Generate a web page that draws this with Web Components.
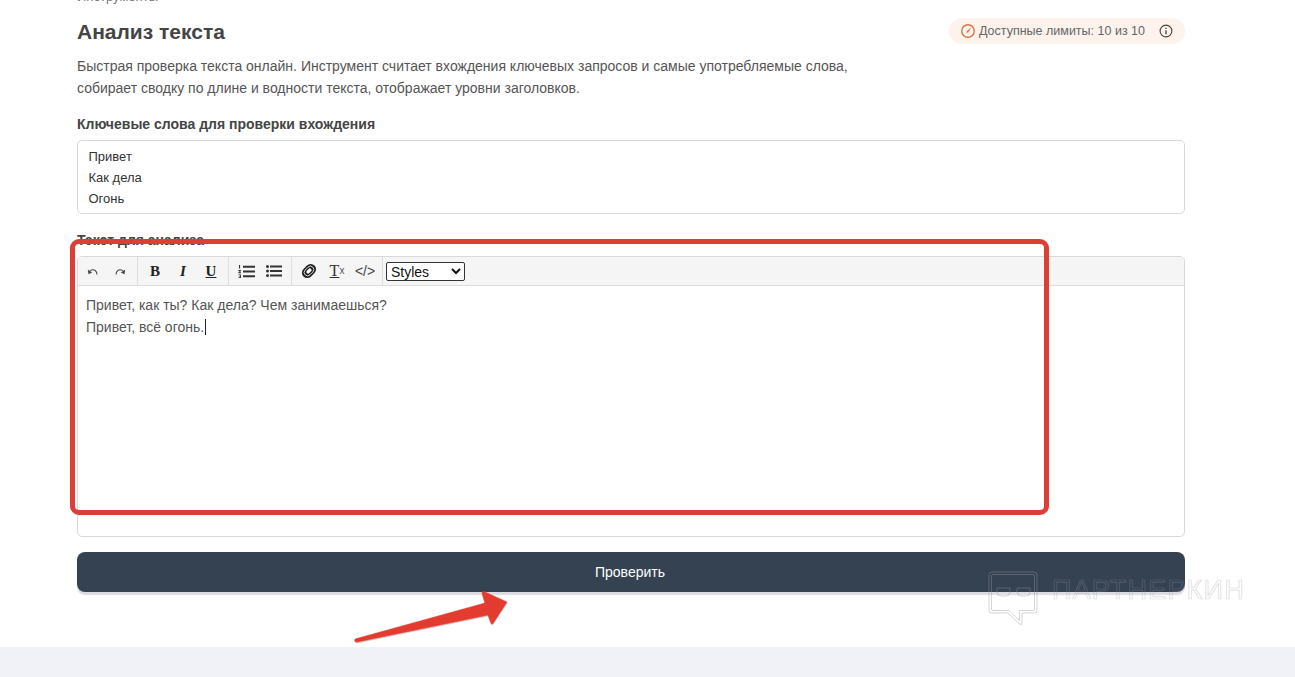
<!DOCTYPE html>
<html lang="ru">
<head>
<meta charset="utf-8">
<title>Анализ текста</title>
<style>
    html, body { margin: 0; height: 677px; overflow: hidden; background: #fff; }
    body { font-family: "Liberation Sans", Arial, sans-serif; color: #4a4a4a; }
</style>
</head>
<body>
<tool-page>
    <limit-badge slot="badge">Доступные лимиты: 10 из 10</limit-badge>
    <keyword-box slot="keywords"></keyword-box>
    <text-editor slot="editor">
        <div>Привет, как ты? Как дела? Чем занимаешься?</div>
        <div>Привет, всё огонь.<span style="border-left:1px solid #222;margin-left:1px"></span></div>
    </text-editor>
</tool-page>
<script>
class ToolPage extends HTMLElement {
    constructor() {
        super()
        this.attachShadow({mode: 'open'})
        this.shadowRoot.innerHTML = `
            <style>
                :host { display: flex; flex-direction: column; height: 677px; position: relative; overflow: hidden; }
                .main { flex: 1; display: flex; flex-direction: column; padding: 0 110px 0 77px; margin-top: -10px; }
                .crumbs { font-size: 13px; line-height: 14px; color: #777; }
                .head { display: flex; justify-content: space-between; align-items: center; margin-top: 13px; height: 30px; }
                h1 { margin: 0; font-size: 21px; line-height: 30px; font-weight: bold; color: #444; }
                p { margin: 8px 0 0; font-size: 14px; line-height: 22px; color: #555; max-width: 800px; }
                label { display: block; margin: 16px 0 7px; font-size: 14px; line-height: 18px; font-weight: bold; color: #444; }
                label.second { margin-top: 17px; }
                button { margin-top: 15px; height: 40px; border: 0; border-radius: 8px; background: #354252; color: #fff;
                    font: 14px "Liberation Sans", Arial, sans-serif; box-shadow: 0 3px 1px #dcdde3; padding: 0 2px 0 0; }
                footer { height: 30px; background: #f1f2f7; flex: none; }
            </style>
            <div class="main">
                <div class="crumbs">Инструменты</div>
                <div class="head">
                    <h1>Анализ текста</h1>
                    <slot name="badge"></slot>
                </div>
                <p>Быстрая проверка текста онлайн. Инструмент считает вхождения ключевых запросов и самые употребляемые слова, собирает сводку по длине и водности текста, отображает уровни заголовков.</p>
                <label>Ключевые слова для проверки вхождения</label>
                <slot name="keywords"></slot>
                <label class="second">Текст для анализа</label>
                <slot name="editor"></slot>
                <button type="button">Проверить</button>
            </div>
            <footer></footer>
            <partner-mark></partner-mark>
            <red-markup></red-markup>
        `
    }
}

class LimitBadge extends HTMLElement {
    constructor() {
        super()
        this.attachShadow({mode: 'open'})
        this.shadowRoot.innerHTML = `
            <style>
                :host { display: flex; align-items: center; height: 26px; margin-bottom: 2px; padding: 0 12px; border-radius: 13px;
                    background: #fdf3ec; font-size: 12.5px; color: #666; }
                svg { display: block; flex: none; }
                .gauge { margin-right: 4px; }
                .info { margin-left: 14px; }
            </style>
            <svg class="gauge" width="14" height="14" viewBox="0 0 14 14" fill="none" stroke="#d9744a">
                <circle cx="7" cy="7" r="6.2" stroke-width="1.4"/>
                <path d="M9.3 4.700 7.700 5.700 6 7.200 5.700 8.400 7 8.300 8.200 6.800z" fill="#d9744a" stroke-width=".5"/>
            </svg>
            <span><slot></slot></span>
            <svg class="info" width="14" height="14" viewBox="0 0 14 14" fill="none" stroke="#444">
                <circle cx="7" cy="7" r="5.9" stroke-width="1.1"/>
                <path d="M7 6.200v4M7 3.800v1.300" stroke-width="1.300"/>
            </svg>
        `
    }
}

class KeywordBox extends HTMLElement {
    constructor() {
        super()
        this.attachShadow({mode: 'open'})
        this.shadowRoot.innerHTML = `
            <style>
                :host { display: block; box-sizing: border-box; height: 74px; padding: 5px 10.5px; border: 1px solid #d9d9d9;
                    border-radius: 5px; font-size: 13px; line-height: 21px; color: #333; }
            </style>
            <div>Привет</div>
            <div>Как дела</div>
            <div>Огонь</div>
        `
    }
}

class TextEditor extends HTMLElement {
    constructor() {
        super()
        this.attachShadow({mode: 'open'})
        this.shadowRoot.innerHTML = `
            <style>
                :host { display: block; box-sizing: border-box; height: 281px; border: 1px solid #d9d9d9; border-radius: 5px; }
                .bar { display: flex; align-items: center; height: 28px; background: #f5f5f5; border-bottom: 1px solid #ddd;
                    border-radius: 4px 4px 0 0; }
                .group { display: flex; align-items: center; height: 100%; padding: 0 3px; border-right: 1px solid #ddd; flex: none; }
                .group:first-child { padding-left: 0; }
                .btn { display: flex; align-items: center; justify-content: center; width: 28px; height: 100%; color: #222; }
                .serif { font: bold 15px "Liberation Serif", serif; }
                .serif.i { font-style: italic; }
                .serif.u { text-decoration: underline; }
                svg { display: block; }
                select { margin-left: 3px; width: 79px; height: 19px; font: 14px "Liberation Sans", Arial, sans-serif; color: #111;
                    background: #fff; border: 1px solid #333; border-radius: 2px; padding: 0; }
                .body { padding: 8px 8px; font-size: 14px; line-height: 22px; color: #555; }
                .code { font: 14px "Liberation Sans", Arial, sans-serif; color: #444; }
                .clear { font: 16px "Liberation Serif", serif; color: #333; }
                .clear u { text-decoration: underline; }
                .clear sub { font-size: 10px; font-family: "Liberation Sans", Arial, sans-serif; color: #555; vertical-align: -2px; line-height: 0; }
            </style>
            <div class="bar">
                <div class="group">
                    <div class="btn"><svg width="11" height="7" viewBox="0 0 11 7" fill="none" stroke="#444" stroke-width="1.100"><path d="M10 6.500C10 2.500 6.500.5 3.200 2.600"/><path d="M.8 1.600 1.500 6.200 5.200 4.400z" fill="#444" stroke="none"/></svg></div>
                    <div class="btn"><svg width="11" height="7" viewBox="0 0 11 7" fill="none" stroke="#444" stroke-width="1.100"><path d="M1 6.500C1 2.500 4.500.5 7.800 2.600"/><path d="M10.200 1.600 9.500 6.200 5.800 4.400z" fill="#444" stroke="none"/></svg></div>
                </div>
                <div class="group">
                    <div class="btn serif">B</div>
                    <div class="btn serif i">I</div>
                    <div class="btn serif u">U</div>
                </div>
                <div class="group">
                    <div class="btn"><svg width="17" height="13" viewBox="0 0 17 13" fill="#333"><path d="M5 .8h12v2H5zM5 5.500h12v2H5zM5 10.200h12v2H5z"/><path d="M1 0h1.100v3.400H1zM.4 5h2.600v1L1.500 7.300H3v.9H.4v-.9L1.900 6H.4zM.4 9.500H3v3.400H.4v-.7h1.700v-.7H1v-.6h1.100v-.7H.4z"/></svg></div>
                    <div class="btn"><svg width="16" height="12" viewBox="0 0 16 12" fill="#333"><path d="M4 .6h12v2H4zM4 5h12v2H4zM4 9.400h12v2H4z"/><circle cx="1.500" cy="1.600" r="1.500"/><circle cx="1.500" cy="6" r="1.500"/><circle cx="1.500" cy="10.400" r="1.500"/></svg></div>
                </div>
                <div class="group">
                    <div class="btn"><svg width="18" height="18" viewBox="0 0 18 18" fill="none" stroke="#222"><g transform="rotate(-45 9 9)"><rect x="1.200" y="3.600" width="15.600" height="10.800" rx="5.400" fill="#222" stroke="none"/><rect x="3.600" y="5.600" width="10.800" height="6.800" rx="3.400" stroke="#ddd" stroke-width=".9"/><rect x="6" y="7.300" width="6" height="3.400" rx="1.700" fill="#fff" stroke="none"/></g></svg></div>
                    <div class="btn clear"><u>T</u><sub>x</sub></div>
                    <div class="btn code">&lt;/&gt;</div>
                </div>
                <select><option>Styles</option></select>
            </div>
            <div class="body"><slot></slot></div>
        `
    }
}

class PartnerMark extends HTMLElement {
    constructor() {
        super()
        this.attachShadow({mode: 'open'})
        this.shadowRoot.innerHTML = `
            <style>
                :host { position: absolute; left: 988px; top: 571px; display: flex; align-items: flex-start; gap: 13px; pointer-events: none; }
                svg { display: block; }
                span { margin-top: 4px; font: 27px/30px "Liberation Sans", Arial, sans-serif; color: transparent;
                    -webkit-text-stroke: .7px rgba(150,150,160,.4); letter-spacing: 1.2px; }
            </style>
            <svg width="51" height="55" viewBox="0 0 51 55" fill="none" stroke="rgba(150,150,160,.4)" stroke-width="1">
                <path d="M4 1h42a3 3 0 0 1 3 3v35a3 3 0 0 1-3 3H34v10q0 2.500-2.500 1L20 42H4a3 3 0 0 1-3-3V4a3 3 0 0 1 3-3z"/>
                <path d="M5 3.500h40a1.500 1.500 0 0 1 1.500 1.500v33a1.500 1.500 0 0 1-1.500 1.500H31.500v10L21 39.500H5A1.500 1.500 0 0 1 3.500 38V5A1.500 1.500 0 0 1 5 3.500z"/>
                <path d="M9 17v4a4 4 0 0 0 4 4h5a4 4 0 0 0 4-4v-4zM29 17v4a4 4 0 0 0 4 4h5a4 4 0 0 0 4-4v-4z"/>
            </svg>
            <span>ПАРТНЕРКИН</span>
        `
    }
}

class RedMarkup extends HTMLElement {
    constructor() {
        super()
        this.attachShadow({mode: 'open'})
        this.shadowRoot.innerHTML = `
            <style>
                :host { position: absolute; inset: 0; display: block; pointer-events: none; }
                .frame { position: absolute; left: 70px; top: 239px; width: 979px; height: 276px; box-sizing: border-box;
                    border: 5px solid #dc3f36; border-radius: 9px; }
                svg { position: absolute; left: 350px; top: 585px; filter: drop-shadow(0 1px 0 rgba(190,120,120,.5)); }
            </style>
            <div class="frame"></div>
            <svg width="165" height="60" viewBox="0 0 165 60">
                <path d="M5 54 135 18 132 8Q132 6 134 6.500L157 17 143 38.500Q142 39.500 141 38L138 30 7 57Q4 57 5 54z" fill="#e33b2f" stroke="#e33b2f" stroke-width=".5" stroke-linejoin="round"/>
            </svg>
        `
    }
}

window.customElements.define('tool-page', ToolPage)
window.customElements.define('limit-badge', LimitBadge)
window.customElements.define('keyword-box', KeywordBox)
window.customElements.define('text-editor', TextEditor)
window.customElements.define('partner-mark', PartnerMark)
window.customElements.define('red-markup', RedMarkup)
</script>
</body>
</html>
